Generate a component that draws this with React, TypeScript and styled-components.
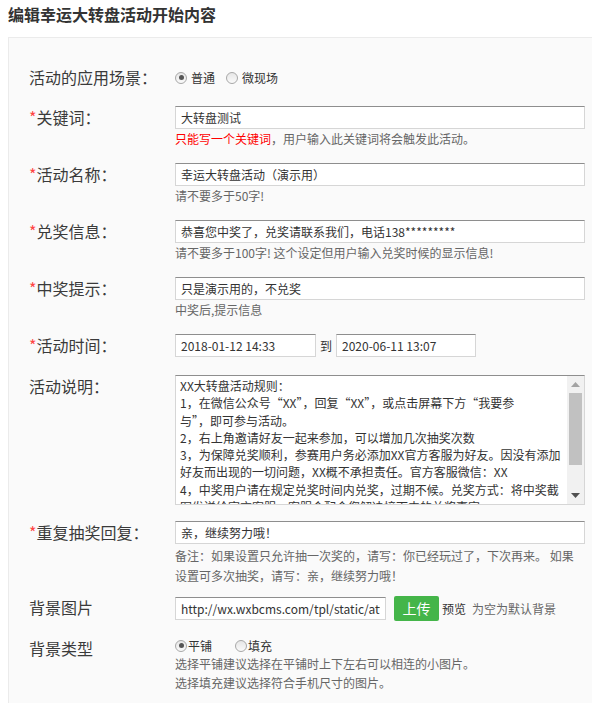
import React from "react";
import styled, { createGlobalStyle } from "styled-components";

const GlobalStyle = createGlobalStyle`
  html, body { margin: 0; padding: 0; background: #fff; overflow: hidden; }
  body { font-family: "Noto Sans CJK SC", "Noto Sans", sans-serif; color: #333; }
  * { box-sizing: border-box; }
`;

const Page = styled.div`
  padding-left: 8px;
`;

const Title = styled.h2`
  margin: 0;
  padding-top: 4px;
  font-size: 16px;
  line-height: 20px;
  font-weight: bold;
  color: #333;
`;

const Panel = styled.div`
  margin-top: 13px;
  border: 1px solid #ebebeb;
  border-right: 0;
  background: #fafafa;
  padding: 28px 0 24px 20px;
`;

const Row = styled.div<{ $gap: number }>`
  display: grid;
  grid-template-columns: 146px 410px;
  align-items: start;
  margin-bottom: ${(p) => p.$gap}px;
`;

const Label = styled.div`
  font-size: 16px;
  line-height: 23px;
  color: #3a3a3a;
  white-space: nowrap;
`;

const Star = styled.span`
  color: #f44;
`;

const Control = styled.div`
  display: flex;
  flex-direction: column;
`;

const Inline = styled.div<{ $height?: number }>`
  display: flex;
  align-items: center;
  height: ${(p) => p.$height ?? 23}px;
  font-size: 12px;
  color: #333;
`;

const TextInput = styled.input<{ $width?: number }>`
  width: ${(p) => (p.$width ? `${p.$width}px` : "100%")};
  height: 23px;
  border: 1px solid #d6d6d6;
  border-top-color: #8e8e8e;
  background: #fff;
  padding: 0 5px;
  font-family: "Noto Sans CJK SC", sans-serif;
  font-size: 12px;
  color: #333;
  outline: none;
`;

const AreaBox = styled.div`
  display: flex;
  width: 410px;
  height: 130px;
  border: 1px solid #d6d6d6;
  border-top-color: #8e8e8e;
  background: #fff;
`;

const Area = styled.textarea`
  flex: 1;
  min-width: 0;
  height: 100%;
  border: none;
  background: transparent;
  padding: 1px 4px;
  font-family: "Noto Sans CJK SC", sans-serif;
  font-size: 12px;
  line-height: 17.3px;
  color: #333;
  resize: none;
  overflow: hidden;
  outline: none;
  white-space: pre-wrap;
`;

const ScrollTrack = styled.div`
  width: 17px;
  flex-shrink: 0;
  display: flex;
  flex-direction: column;
  background: #f1f1f1;
`;

const ScrollButton = styled.div`
  width: 17px;
  height: 17px;
  display: flex;
  align-items: center;
  justify-content: center;
`;

const ScrollThumb = styled.div`
  margin: 0 2px;
  height: 72px;
  background: #c1c1c1;
`;

const ScrollFill = styled.div`
  flex: 1;
`;

const Help = styled.div<{ $lh?: number; $top?: number }>`
  font-size: 12px;
  line-height: ${(p) => p.$lh ?? 20}px;
  margin-top: ${(p) => p.$top ?? 0}px;
  color: #666;
`;

const Warn = styled.span`
  color: #f00;
`;

const RadioItem = styled.span<{ $gapAfter: number; $textGap: number }>`
  display: inline-flex;
  align-items: center;
  margin-right: ${(p) => p.$gapAfter}px;
  gap: ${(p) => p.$textGap}px;
  font-size: 12px;
  color: #333;
`;

const RadioDot = styled.span<{ $on?: boolean }>`
  position: relative;
  width: 12px;
  height: 12px;
  border-radius: 50%;
  border: 1px solid #a8a8a8;
  background: linear-gradient(#e6e6e6, #fafafa);
  &::after {
    content: "";
    display: ${(p) => (p.$on ? "block" : "none")};
    position: absolute;
    left: 2.5px;
    top: 2.5px;
    width: 5px;
    height: 5px;
    border-radius: 50%;
    background: #555;
  }
`;

const To = styled.span`
  margin: 0 4px;
  font-size: 12px;
  color: #333;
`;

const UploadBtn = styled.button`
  margin-left: 8px;
  width: 45px;
  height: 25px;
  border: none;
  border-radius: 2px;
  background: #44b549;
  color: #fff;
  font-family: "Noto Sans CJK SC", sans-serif;
  font-size: 14px;
  padding: 0;
`;

const Preview = styled.span`
  margin-left: 3px;
  font-size: 12px;
  color: #333;
`;

const Note = styled.span`
  margin-left: 6px;
  font-size: 12px;
  color: #666;
`;

const Radio = ({ on, label, gapAfter, textGap }: { on?: boolean; label: string; gapAfter: number; textGap: number }) => (
  <RadioItem $gapAfter={gapAfter} $textGap={textGap}>
    <RadioDot $on={on} />
    {label}
  </RadioItem>
);

const Arrow = ({ up, color }: { up?: boolean; color: string }) => (
  <svg width="9" height="5" viewBox="0 0 9 5">
    <path d={up ? "M0 5 L4.5 0 L9 5 Z" : "M0 0 L4.5 5 L9 0 Z"} fill={color} />
  </svg>
);

const rules = `XX大转盘活动规则：
1，在微信公众号“XX”，回复“XX”，或点击屏幕下方“我要参
与”，即可参与活动。
2，右上角邀请好友一起来参加，可以增加几次抽奖次数
3，为保障兑奖顺利，参赛用户务必添加XX官方客服为好友。因没有添加
好友而出现的一切问题，XX概不承担责任。官方客服微信：XX
4，中奖用户请在规定兑奖时间内兑奖，过期不候。兑奖方式：将中奖截
图发送给官方客服，客服会配合您解决接下来的兑奖事宜。`;

export default function App() {
  return (
    <Page>
      <GlobalStyle />
      <Title>编辑幸运大转盘活动开始内容</Title>
      <Panel>
        <Row $gap={17}>
          <Label>活动的应用场景：</Label>
          <Inline>
            <Radio on label="普通" gapAfter={11} textGap={4} />
            <Radio label="微现场" gapAfter={0} textGap={4} />
          </Inline>
        </Row>

        <Row $gap={14}>
          <Label><Star>*</Star>关键词：</Label>
          <Control>
            <TextInput defaultValue="大转盘测试" />
            <Help><Warn>只能写一个关键词</Warn>，用户输入此关键词将会触发此活动。</Help>
          </Control>
        </Row>

        <Row $gap={14}>
          <Label><Star>*</Star>活动名称：</Label>
          <Control>
            <TextInput defaultValue="幸运大转盘活动（演示用）" />
            <Help>请不要多于50字!</Help>
          </Control>
        </Row>

        <Row $gap={14}>
          <Label><Star>*</Star>兑奖信息：</Label>
          <Control>
            <TextInput defaultValue="恭喜您中奖了，兑奖请联系我们，电话138*********" />
            <Help>请不要多于100字! 这个设定但用户输入兑奖时候的显示信息!</Help>
          </Control>
        </Row>

        <Row $gap={14}>
          <Label><Star>*</Star>中奖提示：</Label>
          <Control>
            <TextInput defaultValue="只是演示用的，不兑奖" />
            <Help>中奖后,提示信息</Help>
          </Control>
        </Row>

        <Row $gap={18}>
          <Label><Star>*</Star>活动时间：</Label>
          <Inline>
            <TextInput $width={141} defaultValue="2018-01-12 14:33" />
            <To>到</To>
            <TextInput $width={140} defaultValue="2020-06-11 13:07" />
          </Inline>
        </Row>

        <Row $gap={16}>
          <Label>活动说明：</Label>
          <AreaBox>
            <Area defaultValue={rules} />
            <ScrollTrack>
              <ScrollButton><Arrow up color="#a3a3a3" /></ScrollButton>
              <ScrollThumb />
              <ScrollFill />
              <ScrollButton><Arrow color="#505050" /></ScrollButton>
            </ScrollTrack>
          </AreaBox>
        </Row>

        <Row $gap={10}>
          <Label><Star>*</Star>重复抽奖回复：</Label>
          <Control>
            <TextInput defaultValue="亲，继续努力哦！" />
            <Help $top={2}>备注：如果设置只允许抽一次奖的，请写：你已经玩过了，下次再来。 如果设置可多次抽奖，请写：亲，继续努力哦！</Help>
          </Control>
        </Row>

        <Row $gap={17}>
          <Label>背景图片</Label>
          <Inline $height={24}>
            <TextInput $width={211} defaultValue="http://wx.wxbcms.com/tpl/static/attachment/background.jpg" />
            <UploadBtn>上传</UploadBtn>
            <Preview>预览</Preview>
            <Note>为空为默认背景</Note>
          </Inline>
        </Row>

        <Row $gap={0}>
          <Label>背景类型</Label>
          <Control>
            <Inline $height={17}>
              <Radio on label="平铺" gapAfter={23} textGap={1} />
              <Radio label="填充" gapAfter={0} textGap={1} />
            </Inline>
            <Help $lh={19}>选择平铺建议选择在平铺时上下左右可以相连的小图片。<br />选择填充建议选择符合手机尺寸的图片。</Help>
          </Control>
        </Row>
      </Panel>
    </Page>
  );
}
